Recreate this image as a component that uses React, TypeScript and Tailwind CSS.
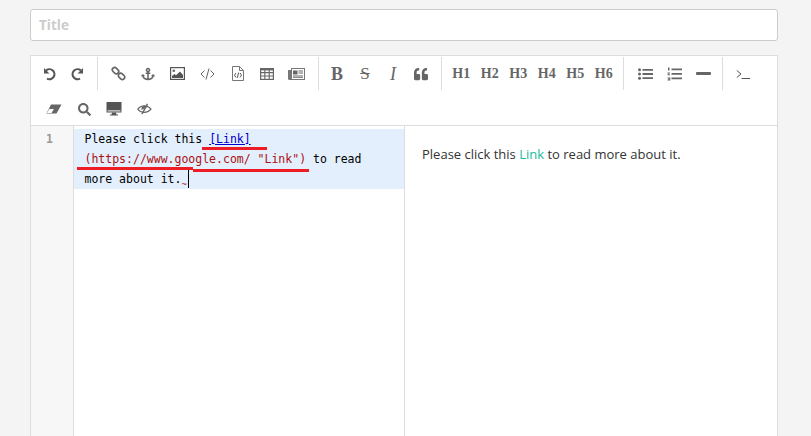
import { FaAnchor, FaQuoteLeft, FaSearch } from "react-icons/fa";

const Sep = ({ className }: { className: string }) => (
  <span className={`w-px h-[33px] bg-[#ddd] shrink-0 ${className}`} />
);

const Btn = ({ w, children }: { w: string; children: React.ReactNode }) => (
  <span className={`flex items-center justify-center text-[#666] shrink-0 ${w}`}>{children}</span>
);

function UndoIcon({ flip }: { flip?: boolean }) {
  return (
    <svg width="14" height="14" viewBox="0 0 14 14" className={flip ? "-scale-x-100" : ""}>
      <path d="M3.2 3.4A5 5 0 1 1 4 11.6" fill="none" stroke="#555" strokeWidth="2.1" />
      <path d="M1 1v5.4h5.4z" fill="#555" />
    </svg>
  );
}

function LinkIcon() {
  return (
    <svg width="15" height="15" viewBox="0 0 15 15" fill="none" stroke="#666" strokeWidth="1.7">
      <rect x="1" y="2.4" width="7" height="4.6" rx="2.3" transform="rotate(45 4.5 4.7)" />
      <rect x="7" y="8" width="7" height="4.6" rx="2.3" transform="rotate(45 10.5 10.3)" />
    </svg>
  );
}

function ImageIcon() {
  return (
    <svg width="15" height="13" viewBox="0 0 15 13">
      <rect x=".6" y=".6" width="13.8" height="11.8" fill="none" stroke="#555" strokeWidth="1.2" />
      <circle cx="3.8" cy="3.8" r="1.3" fill="#666" />
      <path d="M2 11V9l2.5-2 1.5 1.2L10 4.5 13 8v3z" fill="#555" />
    </svg>
  );
}

function CodeIcon() {
  return (
    <svg width="15" height="12" viewBox="0 0 15 12" fill="none" stroke="#666" strokeWidth="1">
      <path d="M4.5 2.5 1 6l3.5 3.5M10.5 2.5 14 6l-3.5 3.5M9 .5 6 11.5" />
    </svg>
  );
}

function FileCodeIcon() {
  return (
    <svg width="12" height="15" viewBox="0 0 12 15" fill="none" stroke="#777" strokeWidth="1">
      <path d="M.5.5h7l4 4v10H.5zM7.5.5v4h4" />
      <path d="M4 7 2.5 9.2 4 11.4M8 7l1.5 2.2L8 11.4M6.6 6.6l-1.2 5.2" stroke="#555" />
    </svg>
  );
}

function TableIcon() {
  return (
    <svg width="14" height="12" viewBox="0 0 14 12" fill="none" stroke="#666" strokeWidth="1.1">
      <rect x=".6" y=".6" width="12.8" height="10.8" fill="none" strokeWidth="1.2" />
      <path d="M.6 1.5h12.8" strokeWidth="1.8" />
      <path d="M.5 4.6h13M.5 8h13M4.8.5v11M9.2.5v11" />
    </svg>
  );
}

function NewsIcon() {
  return (
    <svg width="17" height="12" viewBox="0 0 17 12" fill="#777">
      <path d="M0 2h3V0h14v12H1.5A1.5 1.5 0 0 1 0 10.5z" />
      <path d="M4 1h12v10H4z" fill="#fff" />
      <path d="M5 2.5h4.5v4H5zM10.5 2.5H15v1h-4.5zM10.5 4.5H15v1h-4.5zM5 7.5h10v1H5zM5 9.2h10v.9H5z" fill="#666" />
    </svg>
  );
}

function ListUlIcon() {
  return (
    <svg width="15" height="12" viewBox="0 0 15 12" fill="#666">
      <circle cx="1.5" cy="1.8" r="1.5" />
      <circle cx="1.5" cy="6" r="1.5" />
      <circle cx="1.5" cy="10.2" r="1.5" />
      <path d="M4.5 1H15v1.8H4.5zM4.5 5.1H15v1.8H4.5zM4.5 9.2H15V11H4.5z" />
    </svg>
  );
}

function ListOlIcon() {
  return (
    <svg width="15" height="14" viewBox="0 0 15 14" fill="#666">
      <path d="M1 .5h1.5v3H1zM.5 5.5H3v1H2v.8h1v1H.5v-1h1v-.8h-1zM.5 10.500h2.800v3H.5v-.9h1.800v-.4H1v-.8h1.300v-.1H.5z" />
      <path d="M4.5 1.5H15v1.800H4.5zM4.5 6H15v1.800H4.5zM4.5 10.500H15v1.800H4.5z" />
    </svg>
  );
}

function TerminalIcon() {
  return (
    <svg width="14" height="12" viewBox="0 0 14 12" fill="none" stroke="#555" strokeWidth="1">
      <path d="M.8 2.5 5 6 .8 9.5M5.5 10.5H14" />
    </svg>
  );
}

function EraserIcon() {
  return (
    <svg width="16" height="11" viewBox="0 0 16 11">
      <path d="M5 .5h10.5l-5 9H.5z" fill="#666" />
      <path d="M3.3 5h4.6L5.5 9H1z" fill="#fff" />
    </svg>
  );
}

function DesktopIcon() {
  return (
    <svg width="16" height="14" viewBox="0 0 16 14" fill="#555">
      <path d="M.5 0h15v10.5H.5z" />
      <path d="M1.5 8.4h13v1h-13z" fill="#fff" />
      <path d="M6 10.5h4l.4 2H12v1H4v-1h1.600z" />
    </svg>
  );
}

function EyeIcon() {
  return (
    <svg width="15" height="12" viewBox="0 0 15 12" fill="none" stroke="#666" strokeWidth="1.2">
      <path d="M.8 6.2C4 1.800 10.500 1.800 14 6.200 10.500 10.500 4 10.500.8 6.200z" />
      <path d="M5 6a2.500 2.500 0 0 1 4-2z" fill="#666" />
      <path d="M10.500.8 5 11" strokeWidth="1.5" />
    </svg>
  );
}

const serifHead = "font-['Liberation_Serif',serif] font-bold text-[14px] leading-none";

export default function App() {
  return (
    <div className="w-[811px] h-[436px] overflow-hidden bg-[#f4f4f4] pt-[9px] pl-[30px] pr-[33px] font-['Open_Sans',sans-serif]">
      <div className="h-[32px] bg-white border border-[#ccc] rounded-[3px] flex items-center pl-[8px] text-[13.5px] font-bold text-[#ccc]">
        Title
      </div>

      <div className="relative mt-[14px] h-[381px] bg-white border border-[#ddd] border-b-0 flex flex-col">
        <div className="h-[70px] border-b border-[#ddd] shrink-0">
          <div className="flex items-center h-[33px] mt-px pl-[5px]">
            <Btn w="w-[27px]"><UndoIcon /></Btn>
            <Btn w="w-[27px]"><UndoIcon flip /></Btn>
            <Sep className="ml-[7px] mr-[5px]" />
            <Btn w="w-[30px]"><LinkIcon /></Btn>
            <Btn w="w-[29px]"><FaAnchor size={14} /></Btn>
            <Btn w="w-[30px]"><ImageIcon /></Btn>
            <Btn w="w-[31px]"><CodeIcon /></Btn>
            <Btn w="w-[30px]"><FileCodeIcon /></Btn>
            <Btn w="w-[28px]"><TableIcon /></Btn>
            <Btn w="w-[30px]"><NewsIcon /></Btn>
            <Sep className="ml-[7px] mr-[4px]" />
            <Btn w="w-[28px]"><span className="font-['Liberation_Serif',serif] font-bold text-[18px] leading-none">B</span></Btn>
            <Btn w="w-[28px]"><span className="font-['Liberation_Serif',serif] text-[17px] leading-none line-through">S</span></Btn>
            <Btn w="w-[28px]"><span className="font-['Liberation_Serif',serif] italic text-[18px] leading-none">I</span></Btn>
            <Btn w="w-[28px]"><FaQuoteLeft size={14} /></Btn>
            <Sep className="ml-[6px] mr-[5px]" />
            <Btn w="w-[28.5px]"><span className={serifHead}>H1</span></Btn>
            <Btn w="w-[28.5px]"><span className={serifHead}>H2</span></Btn>
            <Btn w="w-[28.5px]"><span className={serifHead}>H3</span></Btn>
            <Btn w="w-[28.5px]"><span className={serifHead}>H4</span></Btn>
            <Btn w="w-[28.5px]"><span className={serifHead}>H5</span></Btn>
            <Btn w="w-[28.5px]"><span className={serifHead}>H6</span></Btn>
            <Sep className="ml-[5px] mr-[7px]" />
            <Btn w="w-[29px]"><ListUlIcon /></Btn>
            <Btn w="w-[29px]"><ListOlIcon /></Btn>
            <Btn w="w-[29px]"><span className="w-[15px] h-[3px] rounded-[1px] bg-[#666]" /></Btn>
            <Sep className="ml-[4px] mr-[5px]" />
            <Btn w="w-[29px]"><TerminalIcon /></Btn>
          </div>
          <div className="flex items-center h-[20px] mt-[9px] pl-[8px]">
            <Btn w="w-[30px]"><EraserIcon /></Btn>
            <Btn w="w-[30px]"><FaSearch size={13} /></Btn>
            <Btn w="w-[30px]"><DesktopIcon /></Btn>
            <Btn w="w-[30px]"><EyeIcon /></Btn>
          </div>
        </div>

        <div className="flex flex-1 min-h-0">
          <div className="w-[43px] bg-[#f7f7f7] border-r border-[#ddd] shrink-0 pt-[3px] pr-[20px] text-right font-['DejaVu_Sans_Mono',monospace] font-bold text-[11.5px] leading-[20px] text-[#999]">
            1
          </div>
          <div className="w-[331px] border-r border-[#ddd] shrink-0 pt-[3px] font-['DejaVu_Sans_Mono',monospace] text-[11.5px] leading-[20px] text-black">
            <div className="bg-[#e3effc] pl-[10.5px] whitespace-pre">
              <div>
                Please click this <span className="text-[#00c] underline">[Link]</span>
              </div>
              <div>
                <span className="text-[#a11]">(https://www.google.com/ "Link")</span> to read
              </div>
              <div className="flex items-start">
                <span>more about it.</span>
                <span className="h-[16px] w-[7px] mt-[2px] text-[#a11] text-[9px] leading-[26px]">~</span>
                <span className="w-px h-[18px] mt-px bg-black" />
              </div>
            </div>
          </div>
          <div className="flex-1 pl-[17px] pt-[18px] text-[13px] leading-[20px] text-[#333]">
            Please click this <span className="text-[#1abc9c]">Link</span> to read more about it.
          </div>
        </div>

        <span className="absolute left-[171px] top-[91px] w-[65px] h-[3px] bg-[#ee1c25]" />
        <span className="absolute left-[46px] top-[111px] w-[116px] h-[3px] bg-[#ee1c25]" />
        <span className="absolute left-[162px] top-[113px] w-[116px] h-[3px] bg-[#ee1c25]" />
      </div>
    </div>
  );
}
